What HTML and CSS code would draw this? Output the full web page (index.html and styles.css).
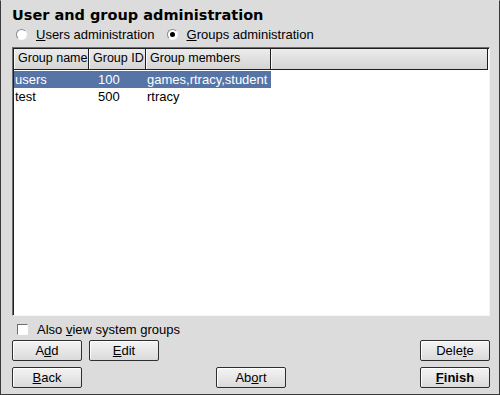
FILE: index.html
```html
<!DOCTYPE html>
<html lang="en">
<head>
  <meta charset="UTF-8">
  <title>User and group administration</title>
  <link rel="stylesheet" href="styles.css">
</head>
<body>
  <div class="window">
    <h1 class="title">User and group administration</h1>
    <div class="radios">
      <label class="radio"><span class="dot"></span><span><u>U</u>sers administration</span></label>
      <label class="radio checked"><span class="dot"></span><span><u>G</u>roups administration</span></label>
    </div>

    <div class="list">
      <div class="row head">
        <div class="c1">Group name</div>
        <div class="c2">Group ID</div>
        <div class="c3">Group members</div>
        <div class="c4"></div>
      </div>
      <div class="row selected">
        <div class="c1">users</div>
        <div class="c2">100</div>
        <div class="c3">games,rtracy,student</div>
      </div>
      <div class="row">
        <div class="c1">test</div>
        <div class="c2">500</div>
        <div class="c3">rtracy</div>
      </div>
    </div>

    <label class="check"><span class="box"></span><span>Also <u>v</u>iew system groups</span></label>

    <div class="buttons">
      <button>A<u>d</u>d</button>
      <button><u>E</u>dit</button>
      <span class="spacer"></span>
      <button>Dele<u>t</u>e</button>
    </div>
    <div class="buttons">
      <button><u>B</u>ack</button>
      <span class="spacer"></span>
      <button>Ab<u>o</u>rt</button>
      <span class="spacer"></span>
      <button class="default"><u>F</u>inish</button>
    </div>
  </div>
</body>
</html>
```

FILE: styles.css
```css
/* Window */
body {
  margin: 0;
  background: #dcdcdc;
  font-family: 'Liberation Sans', Arial, sans-serif;
  font-size: 12px;
  color: #000;
}

.window {
  width: 478px;
  height: 393px;
  border: 1px solid #3a3a3a;
  border-top-color: #dcdcdc;
  background: #dcdcdc;
  display: flex;
  flex-direction: column;
  padding: 0 10px;
}

.title {
  font-family: 'DejaVu Sans', sans-serif;
  font-size: 14.5px;
  font-weight: bold;
  margin: 6px 0 0 1px;
  height: 17px;
  line-height: 17px;
}

u {
  text-decoration: underline;
  text-underline-offset: 1px;
}

/* Radio buttons */
.radios {
  display: flex;
  gap: 12px;
  margin: 2px 0 0 5px;
  height: 17px;
  align-items: center;
}

.radio {
  display: flex;
  align-items: center;
  gap: 9px;
  font-size: 13px;
}

.dot {
  width: 9px;
  height: 9px;
  border-radius: 50%;
  background: #fff;
  border: 1px solid #8a8a8a;
  border-right-color: #fafafa;
  border-bottom-color: #fafafa;
  position: relative;
}

.checked .dot::after {
  content: "";
  position: absolute;
  left: 2px;
  top: 2px;
  width: 5px;
  height: 5px;
  border-radius: 50%;
  background: #000;
}

/* List */
.list {
  margin: 4px -1px 0 1px;
  height: 266px;
  background: #fff;
  border: 1px solid #6e6e6e;
  border-right-color: #f4f4f4;
  border-bottom-color: #f4f4f4;
  box-shadow: inset 1px 1px 0 #1e1e1e;
  padding: 1px 0 0 1px;
}

.row {
  display: flex;
  height: 17px;
  line-height: 17px;
  font-size: 13px;
}

.row div {
  box-sizing: border-box;
  white-space: nowrap;
  overflow: hidden;
}

.c1 { width: 75px; padding-left: 1px; }
.c2 { width: 57px; padding-left: 9px; }
.c3 { width: 125px; padding-left: 1px; }
.c4 { flex: 1; }

.row.head {
  height: 20px;
  line-height: 19px;
  font-size: 12.5px;
  margin-bottom: 1px;
  border-bottom: 1px solid #1e1e1e;
  margin-right: 1px;
}

.row.head div {
  background: linear-gradient(#ececec, #d4d4d4);
  border-left: 1px solid #fafafa;
  border-right: 1px solid #1e1e1e;
  padding-left: 3px;
}

.row.selected {
  width: 257px;
  background: #5675a6;
  color: #fff;
}

/* Checkbox */
.check {
  display: flex;
  align-items: center;
  gap: 9px;
  margin: 5px 0 0 6px;
  height: 16px;
  font-size: 13px;
}

.box {
  width: 9px;
  height: 9px;
  background: #fff;
  border: 1px solid #6e6e6e;
  border-right-color: #fafafa;
  border-bottom-color: #fafafa;
}

/* Buttons */
.buttons {
  display: flex;
  gap: 7px;
  margin: 3px -1px 0 1px;
}

.buttons + .buttons {
  margin-top: 6px;
}

.spacer {
  flex: 1;
}

button {
  width: 70px;
  height: 21px;
  padding: 0;
  font-family: inherit;
  font-size: 13px;
  color: #000;
  background: linear-gradient(#f4f4f4, #dadada);
  border: 1px solid #2e2e2e;
  border-radius: 2px;
  box-shadow: inset 1px 1px 0 #fff;
}

button.default {
  font-weight: bold;
}
```
